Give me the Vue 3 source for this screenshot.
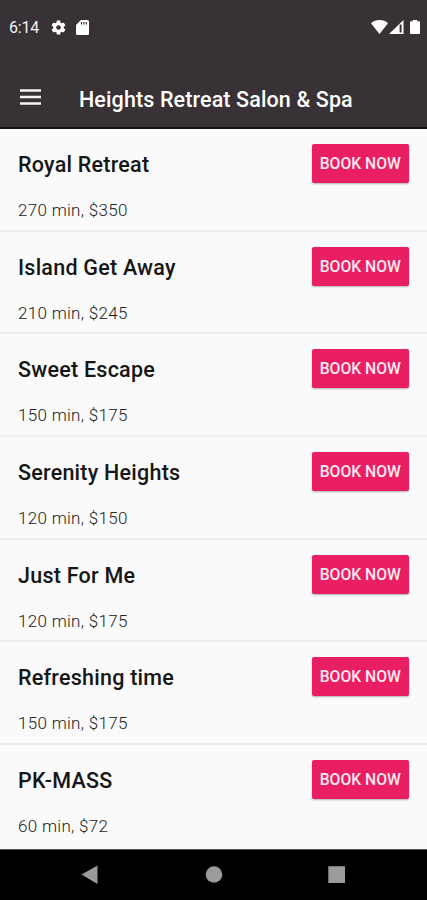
<script setup>
const services = [
  { name: 'Royal Retreat', detail: '270 min, $350' },
  { name: 'Island Get Away', detail: '210 min, $245' },
  { name: 'Sweet Escape', detail: '150 min, $175' },
  { name: 'Serenity Heights', detail: '120 min, $150' },
  { name: 'Just For Me', detail: '120 min, $175' },
  { name: 'Refreshing time', detail: '150 min, $175' },
  { name: 'PK-MASS', detail: '60 min, $72' },
]
</script>

<template>
  <div class="screen">
    <header class="header">
      <div class="status">
        <span class="time">6:14</span>
        <svg class="gear" width="15" height="15" viewBox="1.7 1.7 20.6 20.6" fill="#fff">
          <path d="M19.14 12.94c.04-.3.06-.61.06-.94s-.02-.64-.07-.94l2.03-1.58a.49.49 0 0 0 .12-.61l-1.92-3.32a.49.49 0 0 0-.59-.22l-2.39.96a7 7 0 0 0-1.62-.94l-.36-2.54a.48.48 0 0 0-.48-.41h-3.84a.48.48 0 0 0-.47.41l-.36 2.54c-.59.24-1.13.57-1.62.94l-2.39-.96a.49.49 0 0 0-.59.22L2.74 8.87a.48.48 0 0 0 .12.61l2.03 1.58a7.6 7.6 0 0 0 0 1.88l-2.03 1.58a.49.49 0 0 0-.12.61l1.92 3.32c.12.22.37.29.59.22l2.39-.96c.5.38 1.03.7 1.62.94l.36 2.54c.05.24.24.41.48.41h3.84c.24 0 .44-.17.47-.41l.36-2.54a7 7 0 0 0 1.62-.94l2.39.96c.22.08.47 0 .59-.22l1.92-3.32a.48.48 0 0 0-.12-.61zM12 15.2a3.2 3.2 0 1 1 0-6.4 3.2 3.2 0 0 1 0 6.4z" />
        </svg>
        <svg class="card" width="13" height="15" viewBox="0 0 13 15">
          <path d="M5 0h6.500Q13 0 13 1.500v12Q13 15 11.500 15h-10Q0 15 0 13.500V5z" fill="#fff" />
          <path d="M5.500 2v2.500M7.900 2v2.500M10.300 2v2.500" stroke="#3a343a" stroke-width="1.200" />
        </svg>
        <span class="spacer"></span>
        <svg width="17" height="14" viewBox="0 0 17 14">
          <path d="M0 3.200Q3.500 0 8.500 0T17 3.200L8.500 14z" fill="#fff" />
        </svg>
        <svg class="signal" width="15" height="14" viewBox="0 0 15 14">
          <path d="M0 14 14.500 0v14z" fill="#fff" />
          <path d="M11.600 4.500V12.500" stroke="#393339" stroke-width="2" />
        </svg>
        <svg class="battery" width="10" height="14" viewBox="0 0 10 14">
          <path d="M2.700 0h4.600v1.300H9q1 0 1 1V13q0 1-1 1H1q-1 0-1-1V2.300q0-1 1-1h1.700z" fill="#fff" />
        </svg>
      </div>
      <div class="toolbar">
        <svg class="menu" width="21" height="16" viewBox="0 0 21 16">
          <path d="M0 1.500h21M0 8h21M0 14.500h21" stroke="#f4f3f4" stroke-width="2.300" />
        </svg>
        <h1 class="title">Heights Retreat Salon &amp; Spa</h1>
      </div>
    </header>

    <main class="list">
      <section v-for="s in services" :key="s.name" class="row">
        <div class="info">
          <h2 class="name">{{ s.name }}</h2>
          <p class="detail">{{ s.detail }}</p>
        </div>
        <button class="book">BOOK NOW</button>
      </section>
    </main>

    <nav class="nav">
      <svg width="427" height="50" viewBox="0 0 427 50" fill="#9b9b9b">
        <path d="M81.500 24.500 97.500 15.500v18.500z" />
        <circle cx="214" cy="24.500" r="8.300" />
        <rect x="328.300" y="16.200" width="16.700" height="16.800" />
      </svg>
    </nav>
  </div>
</template>

<style>
body {
  margin: 0;
  background: #000;
}
</style>

<style scoped>
.screen {
  width: 427px;
  height: 900px;
  display: flex;
  flex-direction: column;
  overflow: hidden;
  background: #fafafa;
  font-family: Roboto, sans-serif;
}
.header {
  box-sizing: border-box;
  height: 129px;
  flex: none;
  background: #383237;
  border-bottom: 2px solid #131013;
}
.status {
  display: flex;
  align-items: center;
  height: 54px;
  padding: 0 7px 0 9px;
}
.time {
  width: 42px;
  font-size: 16px;
  letter-spacing: -0.200px;
  line-height: 20px;
  padding-top: 2px;
  color: #f4f3f4;
}
.card {
  margin-left: 10px;
}
.spacer {
  flex: 1;
}
.signal {
  margin-left: 1px;
}
.battery {
  margin-left: 6px;
}
.toolbar {
  display: flex;
  align-items: center;
  height: 73px;
  padding-left: 20px;
}
.menu {
  margin-top: 13px;
}
.title {
  margin: 19px 0 0 38px;
  font-size: 21.500px;
  line-height: 28px;
  font-weight: 500;
  letter-spacing: 0.120px;
  color: #fff;
  white-space: nowrap;
}
.list {
  flex: none;
  height: 720px;
  overflow: hidden;
}
.row {
  box-sizing: border-box;
  height: 102.650px;
  display: flex;
  justify-content: space-between;
  align-items: flex-start;
  padding: 15.200px 18px 0;
  border-bottom: 2px solid #ececec;
}
.row:last-child {
  border-bottom: 0;
}
.name {
  margin: 7px 0 0;
  font-size: 21.500px;
  line-height: 28px;
  font-weight: 500;
  letter-spacing: 0.240px;
  color: #161616;
  white-space: nowrap;
}
.detail {
  margin: 20px 0 0;
  font-size: 17px;
  line-height: 22px;
  font-weight: 300;
  letter-spacing: 0.300px;
  color: #222;
  white-space: nowrap;
}
.book {
  width: 97.500px;
  height: 39px;
  padding: 0;
  border: 0;
  border-radius: 2px;
  background: #e91e63;
  box-shadow: 0 1px 2px rgba(0, 0, 0, 0.3);
  color: #ffeaf1;
  font: 500 15.700px/39px Roboto, sans-serif;
  text-align: center;
  white-space: nowrap;
}
.nav {
  box-sizing: border-box;
  height: 51px;
  flex: none;
  background: #000;
  border-top: 1px solid #555;
}
.nav svg {
  display: block;
}
</style>
